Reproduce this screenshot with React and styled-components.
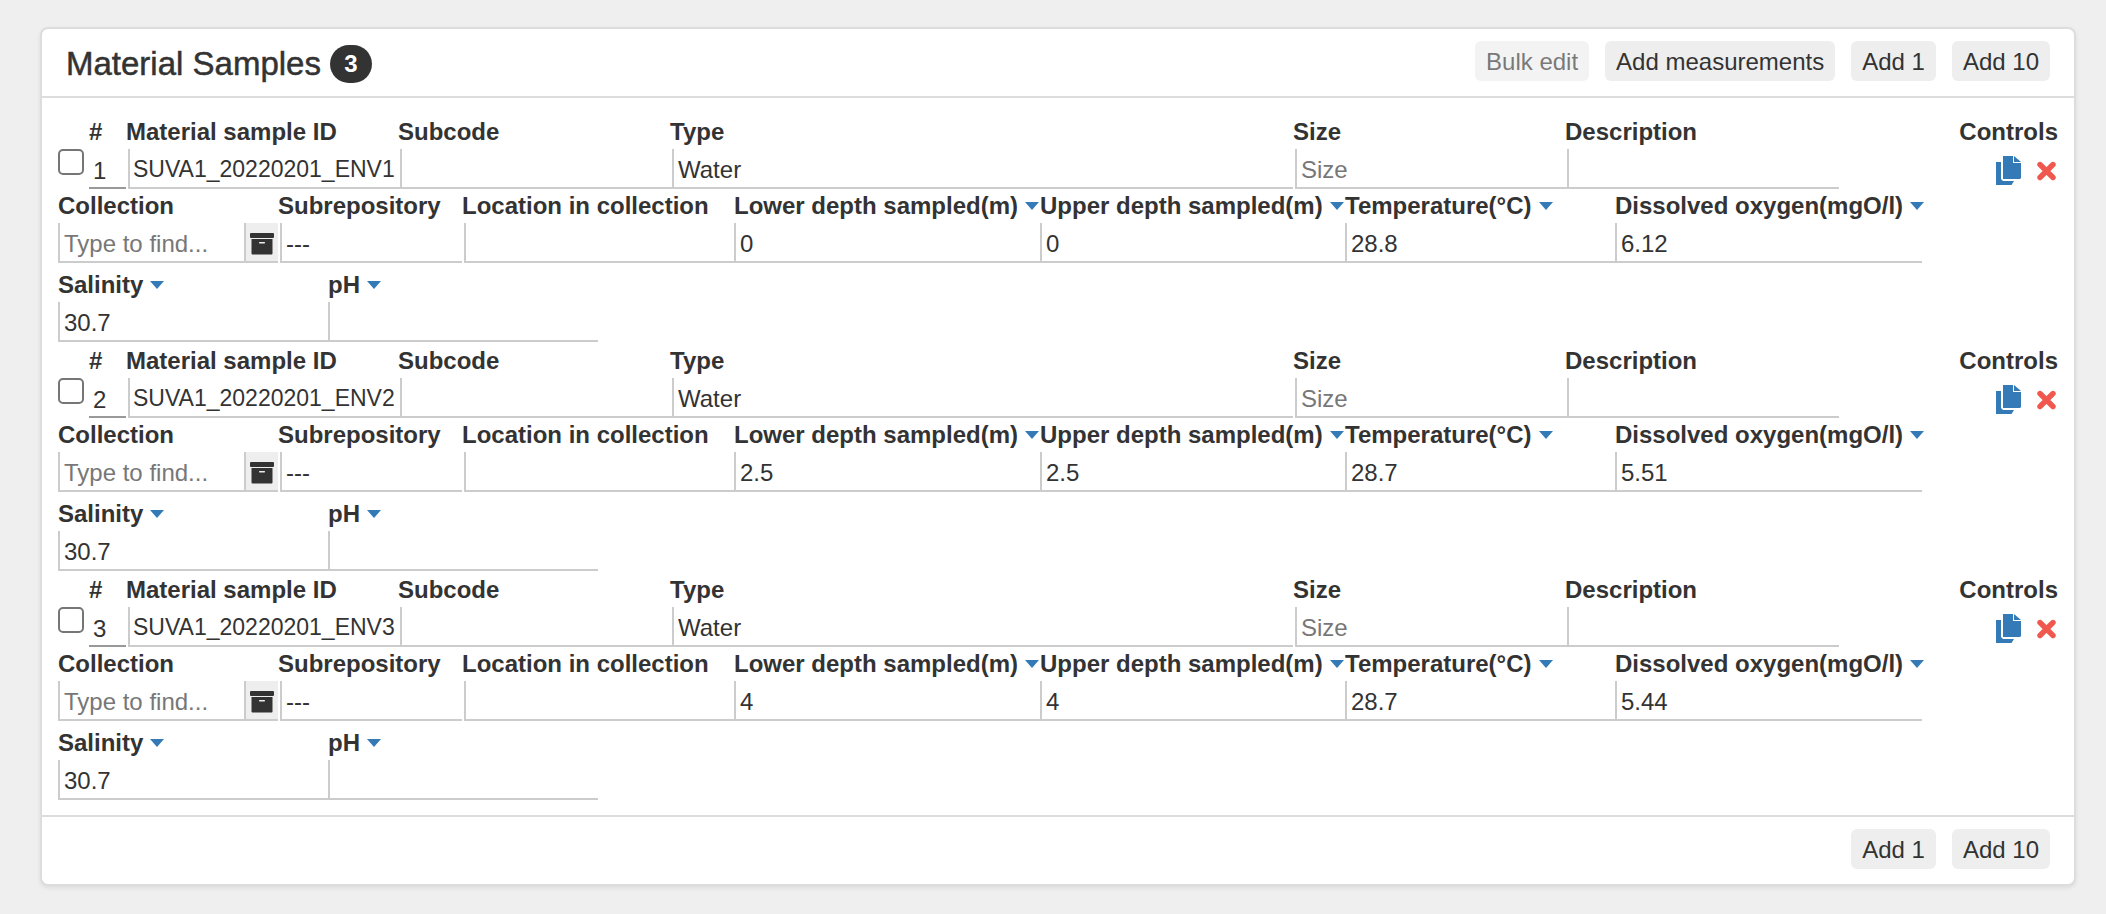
import React, { useId, useState } from "react";
import styled, { createGlobalStyle } from "styled-components";

const GlobalStyle = createGlobalStyle`
  *, *::before, *::after { box-sizing: border-box; }
  body {
    margin: 0;
    padding: 27px 30px 28px 40px;
    background: #efefef;
    color: #333;
    font-family: "Liberation Sans", Arial, sans-serif;
    font-size: 24px;
    line-height: 28px;
  }
`;

const Panel = styled.section`
  background: #fff;
  border: 2px solid #ddd;
  border-radius: 8px;
  box-shadow: 0 2px 4px rgba(0, 0, 0, 0.08);
`;

const PanelHeader = styled.header`
  display: flex;
  align-items: flex-start;
  justify-content: space-between;
  padding: 12px 24px 13px;
  border-bottom: 2px solid #ddd;
`;

const PanelFooter = styled.footer`
  display: flex;
  justify-content: flex-end;
  padding: 12px 24px 15px;
  border-top: 2px solid #ddd;
`;

const Title = styled.h2`
  display: flex;
  align-items: center;
  gap: 9px;
  margin: 0;
  padding-top: 4px;
  font-size: 33px;
  line-height: 38px;
  font-weight: 400;
  -webkit-text-stroke: 0.5px #333;
`;

const Badge = styled.span`
  min-width: 42px;
  padding: 0 12px;
  border-radius: 20px;
  background: #333;
  color: #fff;
  font-size: 24px;
  line-height: 38px;
  font-weight: 700;
  text-align: center;
  -webkit-text-stroke: 0;
`;

const ButtonBar = styled.div`
  display: flex;
  flex-wrap: wrap;
  gap: 16px;
`;

const Button = styled.button`
  height: 40px;
  padding: 2px 11px 0;
  border: 0;
  border-radius: 6px;
  background: #eee;
  color: #333;
  font: inherit;
  white-space: nowrap;
  cursor: pointer;

  &:disabled {
    opacity: 0.65;
    color: #333;
    cursor: not-allowed;
  }
`;

const SampleList = styled.div`
  display: flex;
  flex-direction: column;
  gap: 2px;
  padding: 17px 16px 15px;
`;

const SampleRow = styled.div`
  display: flex;
`;

const Measurements = styled.div`
  display: flex;
  flex-wrap: wrap;
  row-gap: 5px;
`;

const Checkbox = styled.input`
  appearance: none;
  flex: none;
  width: 26px;
  height: 26px;
  margin: 34px 5px 0 0;
  border: 2px solid #767676;
  border-radius: 5px;
  background: #fff;

  &:checked { background: #337ab7; }
`;

const Field = styled.div`
  display: flex;
  flex-direction: column;
  flex: 0 ${(p) => (p.$shrink ? 1 : 0)} ${(p) => p.$width}px;
  min-width: 0;
  margin-right: ${(p) => p.$gap || 0}px;
`;

const LabelLine = styled.div`
  display: flex;
  align-items: center;
  gap: 7px;
  height: 34px;
  padding: 3px 0;
  margin-left: ${(p) => -(p.$outdent || 0)}px;
  font-weight: 700;
  white-space: nowrap;
`;

const TextInput = styled.input`
  width: 100%;
  height: 40px;
  padding: 4px 4px 0;
  border: 0;
  border-left: 2px solid #ccc;
  border-bottom: 2px solid #ccc;
  border-radius: 0;
  outline: 0;
  background: #fff;
  color: #333;
  font: inherit;

  &::placeholder { color: #777; opacity: 1; }
`;

const IndexInput = styled(TextInput)`
  border-left: 0;
  border-bottom-color: #999;
  padding-top: 6px;
`;

const SampleIdInput = styled(TextInput)`
  padding: 3px 2px 0 3px;
  font-size: 23px;
`;

const Select = styled.select`
  appearance: none;
  width: 100%;
  height: 40px;
  padding: 4px 4px 0;
  border: 0;
  border-left: 2px solid #ccc;
  border-bottom: 2px solid #ccc;
  border-radius: 0;
  background: #fff;
  color: #333;
  font: inherit;
`;

const InputGroup = styled.div`
  display: flex;
`;

const AddonButton = styled.button`
  flex: none;
  display: flex;
  align-items: center;
  justify-content: center;
  width: 34px;
  height: 40px;
  padding: 4px 0 0;
  border: 0;
  border-left: 2px solid #ccc;
  border-bottom: 2px solid #ccc;
  background: #eee;
  color: #333;
`;

const IconButton = styled.button`
  display: flex;
  padding: 0;
  border: 0;
  background: none;
  color: ${(p) => p.$color};
  cursor: pointer;
`;

const Controls = styled.div`
  margin-left: auto;
`;

const ControlIcons = styled.div`
  display: flex;
  align-items: center;
  justify-content: flex-end;
  gap: 16px;
  height: 40px;
  padding: 3px 2px 0 0;
`;

const CaretIcon = () => (
  <svg width="14" height="8" viewBox="0 0 14 8" aria-hidden="true">
    <path d="M0 0H14L7 8Z" fill="currentColor" />
  </svg>
);

const ArchiveIcon = () => (
  <svg width="24" height="22" viewBox="0 0 24 22" aria-hidden="true">
    <rect width="24" height="5" y="0" rx="1" fill="currentColor" />
    <path
      fill="currentColor"
      fillRule="evenodd"
      d="M1.500 6H22.500V20.500Q22.500 21.500 21.500 21.500H2.500Q1.500 21.500 1.500 20.500ZM9.500 9Q9 9 9 9.800T9.500 10.600H14.500Q15 10.600 15 9.800T14.500 9Z"
    />
  </svg>
);

const CopyIcon = () => (
  <svg width="25" height="29" viewBox="0 0 25 29" fill="currentColor" aria-hidden="true">
    <path d="M7 0H17V7H25V22L24 23H7Z" />
    <path d="M18 0L25 6H18Z" />
    <path d="M0 6H5V23L7 25H18L15.500 29H0Z" />
  </svg>
);

const RemoveIcon = () => (
  <svg width="19" height="20" viewBox="0 0 19 20" aria-hidden="true">
    <path d="M3 3.500L16 16.500M16 3.500L3 16.500" stroke="currentColor" strokeWidth="5.400" strokeLinecap="round" />
  </svg>
);

function LabelledField({ label, width, gap, shrink, outdent, menu, children }) {
  const id = useId();
  return (
    <Field $width={width} $gap={gap} $shrink={shrink}>
      <LabelLine $outdent={outdent}>
        <label htmlFor={id}>{label}</label>
        {menu && (
          <IconButton type="button" $color="#337ab7" aria-label={`${label} options`}>
            <CaretIcon />
          </IconButton>
        )}
      </LabelLine>
      {children(id)}
    </Field>
  );
}

const MEASUREMENTS = [
  { key: "lower", label: "Lower depth sampled(m)", width: 306 },
  { key: "upper", label: "Upper depth sampled(m)", width: 305 },
  { key: "temperature", label: "Temperature(°C)", width: 270 },
  { key: "oxygen", label: "Dissolved oxygen(mgO/l)", width: 307 },
  { key: "salinity", label: "Salinity", width: 270 },
  { key: "ph", label: "pH", width: 270 },
];

const SAMPLES = [
  { id: "SUVA1_20220201_ENV1", lower: "0", upper: "0", temperature: "28.8", oxygen: "6.12", salinity: "30.7", ph: "" },
  { id: "SUVA1_20220201_ENV2", lower: "2.5", upper: "2.5", temperature: "28.7", oxygen: "5.51", salinity: "30.7", ph: "" },
  { id: "SUVA1_20220201_ENV3", lower: "4", upper: "4", temperature: "28.7", oxygen: "5.44", salinity: "30.7", ph: "" },
];

function Sample({ index, sample }) {
  const [checked, setChecked] = useState(false);
  return (
    <div>
      <SampleRow>
        <Checkbox
          type="checkbox"
          aria-label={`Select sample ${index}`}
          checked={checked}
          onChange={(e) => setChecked(e.target.checked)}
        />
        <LabelledField label="#" width={37} gap={2}>
          {(id) => <IndexInput id={id} defaultValue={index} />}
        </LabelledField>
        <LabelledField label="Material sample ID" width={272} outdent={2}>
          {(id) => <SampleIdInput id={id} defaultValue={sample.id} />}
        </LabelledField>
        <LabelledField label="Subcode" width={272} outdent={2}>
          {(id) => <TextInput id={id} />}
        </LabelledField>
        <LabelledField label="Type" width={621} gap={2} shrink outdent={2}>
          {(id) => (
            <Select id={id} defaultValue="Water">
              <option>Water</option>
            </Select>
          )}
        </LabelledField>
        <LabelledField label="Size" width={272} outdent={2}>
          {(id) => <TextInput id={id} placeholder="Size" />}
        </LabelledField>
        <LabelledField label="Description" width={272} outdent={2}>
          {(id) => <TextInput id={id} />}
        </LabelledField>
        <Controls>
          <LabelLine>Controls</LabelLine>
          <ControlIcons>
            <IconButton type="button" $color="#337ab7" aria-label="Duplicate sample">
              <CopyIcon />
            </IconButton>
            <IconButton type="button" $color="#f0584f" aria-label="Remove sample">
              <RemoveIcon />
            </IconButton>
          </ControlIcons>
        </Controls>
      </SampleRow>
      <Measurements>
        <LabelledField label="Collection" width={220} gap={2}>
          {(id) => (
            <InputGroup>
              <TextInput id={id} placeholder="Type to find..." />
              <AddonButton type="button" aria-label="Browse collections">
                <ArchiveIcon />
              </AddonButton>
            </InputGroup>
          )}
        </LabelledField>
        <LabelledField label="Subrepository" width={182} gap={2} outdent={2}>
          {(id) => (
            <Select id={id}>
              <option>---</option>
            </Select>
          )}
        </LabelledField>
        <LabelledField label="Location in collection" width={270} outdent={2}>
          {(id) => <TextInput id={id} />}
        </LabelledField>
        {MEASUREMENTS.map((m) => (
          <LabelledField key={m.key} label={m.label} width={m.width} menu>
            {(id) => <TextInput id={id} defaultValue={sample[m.key]} />}
          </LabelledField>
        ))}
      </Measurements>
    </div>
  );
}

export default function App() {
  return (
    <>
      <GlobalStyle />
      <Panel>
        <PanelHeader>
          <Title>
            Material Samples <Badge>3</Badge>
          </Title>
          <ButtonBar>
            <Button type="button" disabled>Bulk edit</Button>
            <Button type="button">Add measurements</Button>
            <Button type="button">Add 1</Button>
            <Button type="button">Add 10</Button>
          </ButtonBar>
        </PanelHeader>
        <SampleList>
          {SAMPLES.map((sample, i) => (
            <Sample key={sample.id} index={i + 1} sample={sample} />
          ))}
        </SampleList>
        <PanelFooter>
          <ButtonBar>
            <Button type="button">Add 1</Button>
            <Button type="button">Add 10</Button>
          </ButtonBar>
        </PanelFooter>
      </Panel>
    </>
  );
}
